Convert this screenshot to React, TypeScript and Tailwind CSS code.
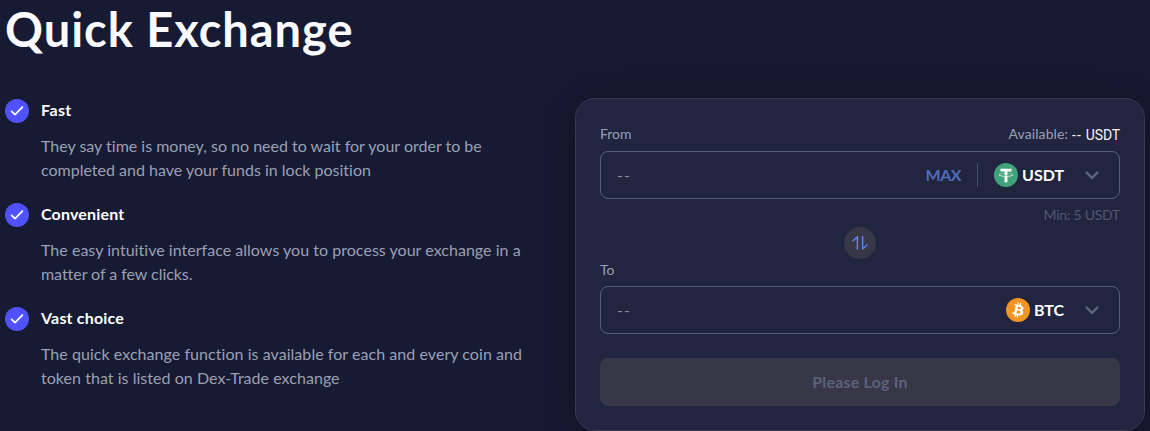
const lato = "font-['Lato','Liberation_Sans',sans-serif] [font-variant-ligatures:none]";

type Feature = { title: string; titleClass: string; lines: { text: string; className: string }[] };

const features: Feature[] = [
  {
    title: 'Fast',
    titleClass: 'tracking-[0.4px]',
    lines: [
      { text: 'They say time is money, so no need to wait for your order to be', className: 'tracking-[0px]' },
      { text: 'completed and have your funds in lock position', className: 'tracking-[0px]' },
    ],
  },
  {
    title: 'Convenient',
    titleClass: 'tracking-[0.17px]',
    lines: [
      { text: 'The easy intuitive interface allows you to process your exchange in a', className: 'tracking-[0.03px]' },
      { text: 'matter of a few clicks.', className: 'tracking-[-0.05px]' },
    ],
  },
  {
    title: 'Vast choice',
    titleClass: 'tracking-[0.18px]',
    lines: [
      { text: 'The quick exchange function is available for each and every coin and', className: 'tracking-[0.05px]' },
      { text: 'token that is listed on Dex-Trade exchange', className: 'tracking-[0.04px]' },
    ],
  },
];

function CheckBadge() {
  return (
    <svg className="size-6 shrink-0" viewBox="0 0 24 24" fill="none">
      <circle cx="12" cy="12" r="12" fill="#5052ff" />
      <path d="M6.6 12.3l3.4 3.3 7.4-7.4" stroke="#fff" strokeWidth="1.7" strokeLinecap="round" strokeLinejoin="round" />
    </svg>
  );
}

function TetherIcon() {
  return (
    <svg className="size-6 shrink-0" viewBox="0 0 32 32">
      <circle cx="16" cy="16" r="16" fill="#3fa27c" />
      <path
        fill="#fff"
        d="M17.922 17.383v-.002c-.11.008-.677.042-1.942.042-1.01 0-1.721-.03-1.971-.042v.003c-3.888-.171-6.79-.848-6.79-1.658 0-.809 2.902-1.486 6.79-1.66v2.644c.254.018.982.061 1.988.061 1.207 0 1.812-.05 1.925-.06v-2.643c3.88.173 6.775.85 6.775 1.658 0 .81-2.895 1.485-6.775 1.657m0-3.59v-2.366h5.414V7.819H8.595v3.608h5.414v2.365c-4.4.202-7.709 1.074-7.709 2.118 0 1.044 3.309 1.915 7.709 2.118v7.582h3.913v-7.584c4.393-.202 7.694-1.073 7.694-2.116 0-1.043-3.301-1.914-7.694-2.117"
      />
    </svg>
  );
}

function BitcoinIcon() {
  return (
    <svg className="size-6 shrink-0" viewBox="0 0 32 32">
      <circle cx="16" cy="16" r="16" fill="#f29424" />
      <path
        fill="#fff"
        d="M23.189 14.02c.314-2.096-1.283-3.223-3.465-3.975l.708-2.84-1.728-.43-.69 2.765c-.454-.114-.92-.22-1.385-.326l.695-2.783L15.596 6l-.708 2.839c-.376-.086-.746-.17-1.104-.26l.002-.009-2.384-.595-.46 1.846s1.283.294 1.256.312c.7.175.826.638.805 1.006l-.806 3.235c.048.012.11.03.18.057l-.183-.045-1.13 4.532c-.086.212-.303.531-.793.41.018.025-1.256-.313-1.256-.313l-.858 1.978 2.25.561c.418.105.828.215 1.231.318l-.715 2.872 1.727.43.708-2.84c.472.127.93.245 1.378.357l-.706 2.828 1.728.43.715-2.866c2.948.558 5.164.333 6.097-2.333.752-2.146-.037-3.385-1.588-4.192 1.13-.26 1.98-1.003 2.207-2.538zm-3.95 5.538c-.533 2.147-4.148.986-5.32.695l.95-3.805c1.172.293 4.929.872 4.37 3.11zm.535-5.569c-.487 1.953-3.495.96-4.47.717l.86-3.45c.975.243 4.118.696 3.61 2.733z"
      />
    </svg>
  );
}

function Chevron() {
  return (
    <svg className="h-6 w-4 shrink-0" viewBox="0 0 16 24" fill="none">
      <path d="M2.7 9.6l5.3 5.3 5.3-5.3" stroke="#5f647d" strokeWidth="2.4" strokeLinecap="round" strokeLinejoin="round" />
    </svg>
  );
}

export default function App() {
  return (
    <main className={`flex h-[431px] w-[1150px] overflow-hidden bg-[#161a33] pl-[5px] ${lato}`}>
      <section className="w-[570px] shrink-0">
        <h1 className="h-[99px] pt-px text-[47px] leading-[56px] font-bold tracking-[0.98px] whitespace-nowrap text-[#fafaff]">
          Quick Exchange
        </h1>
        <div className="flex flex-col gap-5">
          {features.map((f) => (
            <div key={f.title} className="flex h-[84px] items-start gap-3">
              <CheckBadge />
              <div className="-mt-px text-base leading-6 whitespace-nowrap">
                <h2 className={`mb-3 font-bold text-white ${f.titleClass}`}>{f.title}</h2>
                {f.lines.map((l) => (
                  <p key={l.text} className="text-[#9ca0b4]">
                    <span className={l.className}>{l.text}</span>
                  </p>
                ))}
              </div>
            </div>
          ))}
        </div>
      </section>

      <section className="mt-[98px] h-[333px] w-[570px] shrink-0 rounded-[20px] border border-[#373849] bg-[#21253f] px-6 pt-[23px] whitespace-nowrap shadow-[0_4px_40px_rgba(14,16,26,0.8)]">
        <div className="flex h-[29px] items-start justify-between text-sm leading-6 text-[#9ca0b4]">
          <span>From</span>
          <span className="flex gap-1">
            <span className="tracking-[0.1px]">Available:</span>
            <span className="flex gap-1 pt-px font-['Roboto',sans-serif] text-[#f4f4fa]">
              <span className="tracking-[1px]">--</span>
              <span className="tracking-[-0.15px]">USDT</span>
            </span>
          </span>
        </div>
        <div className="flex h-12 items-center rounded-lg border border-[#585e7b] pr-[19px] pl-4 text-base leading-6 font-bold">
          <span className="flex-1 font-normal tracking-[1px] text-[#85899e]">--</span>
          <span className="pb-px tracking-[-0.5px] text-[#4f6dbe]">MAX</span>
          <span className="mr-4 ml-4 h-6 w-px bg-[#4a4f68]" />
          <TetherIcon />
          <span className="ml-1 w-[42px] pb-px text-white">USDT</span>
          <span className="ml-5 flex"><Chevron /></span>
        </div>
        <div className="flex h-7 items-center justify-end pt-[3px] text-sm tracking-[-0.25px] text-[#52566f]">Min: 5 USDT</div>
        <div className="flex h-8 justify-center">
          <span className="flex size-8 items-center justify-center rounded-full bg-[#373748]">
            <svg className="size-8" viewBox="0 0 32 32" fill="none" stroke="#6582e6" strokeWidth="1.5" strokeLinecap="round" strokeLinejoin="round">
              <path d="M9 13.7l4.4-4V22M23 18l-4.4 4V9.7" />
            </svg>
          </span>
        </div>
        <div className="h-[27px] text-sm leading-[22px] text-[#9ca0b4]">To</div>
        <div className="flex h-12 items-center rounded-lg border border-[#585e7b] pr-[19px] pl-4 text-base leading-6 font-bold">
          <span className="flex-1 font-normal tracking-[1px] text-[#85899e]">--</span>
          <BitcoinIcon />
          <span className="ml-1 w-[30px] pb-px tracking-[-0.1px] text-white">BTC</span>
          <span className="ml-5 flex"><Chevron /></span>
        </div>
        <button className="mt-6 block h-12 w-full rounded-lg bg-[#373748] pb-px text-center text-base font-bold tracking-[0.2px] text-[#5b617c]">
          Please Log In
        </button>
      </section>
    </main>
  );
}
